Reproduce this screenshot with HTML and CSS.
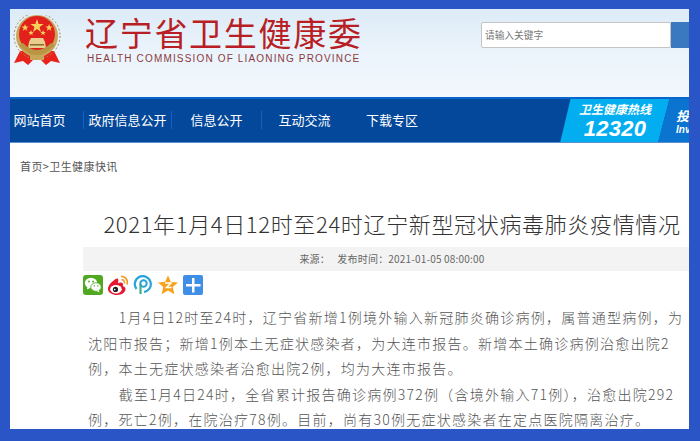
FILE: index.html
```html
<!DOCTYPE html>
<html lang="zh-CN">
<head>
  <meta charset="UTF-8" />
  <title>辽宁省卫生健康委</title>
  <link rel="stylesheet" href="styles.css">
</head>
<body>
<div class="page">
  <div class="header">
    <svg class="emblem" viewBox="0 0 48 50">
      <path d="M7 36 L1 48 L10 46 L15 50 L20 45 L28 45 L33 50 L38 46 L47 48 L41 36 Z" fill="#e8231c"/>
      <circle cx="24" cy="21" r="21" fill="#c9a55a"/>
      <circle cx="24" cy="21" r="23" fill="none" stroke="#a8894d" stroke-width="1" stroke-dasharray="2 2"/>
      <circle cx="24" cy="19" r="18" fill="#e3211c"/>
      <path d="M24 4 L25.6 9 L30.6 9 L26.5 12 L28 17 L24 14 L20 17 L21.5 12 L17.4 9 L22.4 9 Z" fill="#f4d35a"/>
      <path d="M12 9 l1 2.6 2.6 0 -2.1 1.6 .8 2.6 -2.3 -1.6 -2.2 1.6 .8 -2.6 -2.1 -1.6 2.6 0 Z" fill="#f4d35a"/>
      <path d="M36 9 l1 2.6 2.6 0 -2.1 1.6 .8 2.6 -2.3 -1.6 -2.2 1.6 .8 -2.6 -2.1 -1.6 2.6 0 Z" fill="#f4d35a"/>
      <path d="M18 15 l.8 2 2 0 -1.6 1.2 .6 2 -1.8 -1.2 -1.7 1.2 .6 -2 -1.6 -1.2 2 0 Z" fill="#f4d35a"/>
      <path d="M30 15 l.8 2 2 0 -1.6 1.2 .6 2 -1.8 -1.2 -1.7 1.2 .6 -2 -1.6 -1.2 2 0 Z" fill="#f4d35a"/>
      <path d="M16 27 L18 23 L30 23 L32 27 L33 33 L15 33 Z" fill="#e8cf90"/>
      <path d="M17 29 h14 v1.5 h-14 Z" fill="#8a6a30"/>
      <path d="M6 30 Q24 50 42 30 L38 28 Q24 42 10 28 Z" fill="#b99443"/>
      <path d="M17 40 h14 v5 h-14 Z" fill="#c9a55a"/>
    </svg>
    <div class="brand">
      <div class="brand-cn">辽宁省卫生健康委</div>
      <div class="brand-en">HEALTH COMMISSION OF LIAONING PROVINCE</div>
    </div>
    <div class="search">
      <input class="search-input" type="text" placeholder="请输入关键字">
      <button class="search-btn" type="button"></button>
    </div>
  </div>

  <div class="navbar">
    <a class="nav-item nav-first">网站首页</a>
    <a class="nav-item nav-gov">政府信息公开</a>
    <a class="nav-item nav-info">信息公开</a>
    <a class="nav-item nav-talk">互动交流</a>
    <a class="nav-item nav-down">下载专区</a>
    <div class="hotline">
      <span class="hotline-title">卫生健康热线</span>
      <span class="hotline-num">12320</span>
    </div>
    <div class="invest">
      <span class="invest-title">投诉</span>
      <span class="invest-en">Investigate</span>
    </div>
  </div>

  <div class="crumb">首页&gt;卫生健康快讯</div>

  <div class="article">
    <h1 class="article-title">2021年1月4日12时至24时辽宁新型冠状病毒肺炎疫情情况</h1>
    <div class="meta">来源：&nbsp;&nbsp;&nbsp;发布时间：2021-01-05 08:00:00</div>
    <div class="share">
      <svg class="share-icon" viewBox="0 0 20 20">
        <rect width="20" height="20" rx="3" fill="#4fa81f"/>
        <ellipse cx="8" cy="8" rx="6.2" ry="5.2" fill="#fff"/>
        <path d="M4.5 11 L4 14.5 L8 12.5 Z" fill="#fff"/>
        <ellipse cx="13" cy="12" rx="5.2" ry="4.3" fill="#fff" stroke="#4fa81f" stroke-width=".8"/>
        <path d="M15.5 15 L16.5 17.5 L13.5 16 Z" fill="#fff"/>
        <circle cx="6" cy="6.5" r=".9" fill="#4fa81f"/><circle cx="10" cy="6.5" r=".9" fill="#4fa81f"/>
        <circle cx="11.3" cy="11" r=".7" fill="#4fa81f"/><circle cx="14.8" cy="11" r=".7" fill="#4fa81f"/>
      </svg>
      <svg class="share-icon" viewBox="0 0 20 20">
        <path d="M9 3.5 C4.5 5.5 0 10 0 14 C0 17.5 4.5 20 9 20 C14 20 17.5 17 17.5 14 C17.5 12.3 16 11.4 14.8 11 C15.5 9.2 15 7.6 13 7.4 C12 7.3 10.8 7.8 10 8.2 C10.5 6 10.5 3 9 3.5 Z" fill="#e6162d"/>
        <ellipse cx="8" cy="14.2" rx="5.8" ry="4.2" fill="#fff"/>
        <circle cx="7.5" cy="14.4" r="2.6" fill="#222"/>
        <circle cx="6.7" cy="14.6" r=".8" fill="#fff"/>
        <path d="M13 1.5 C17 1 20.5 5 19 9.5" fill="none" stroke="#f59a23" stroke-width="1.7"/>
        <path d="M13.5 4.8 C15.5 4.5 17 6.3 16.4 8.5" fill="none" stroke="#f59a23" stroke-width="1.5"/>
      </svg>
      <svg class="share-icon" viewBox="0 0 20 20">
        <path d="M3.5 14 A8 8 0 1 1 11 17" fill="none" stroke="#29a3dc" stroke-width="2.2"/>
        <circle cx="10.5" cy="8.5" r="3.2" fill="none" stroke="#29a3dc" stroke-width="2"/>
        <path d="M7.5 9 V19" stroke="#3fae8c" stroke-width="2.2" fill="none"/>
      </svg>
      <svg class="share-icon" viewBox="0 0 20 20">
        <path d="M10 0.5 L12.8 6.8 L20 7.4 L14.7 12 L16.4 19.2 L10 15.5 L3.6 19.2 L5.3 12 L0 7.4 L7.2 6.8 Z" fill="#f5a31a"/>
        <path d="M7 8 H13 L8.5 12.5 H13.5" fill="none" stroke="#fff" stroke-width="1.5"/>
      </svg>
      <svg class="share-icon" viewBox="0 0 20 20">
        <rect width="20" height="20" rx="2" fill="#3f8fe6"/>
        <path d="M3 9 H9 V3 H11.5 V9 H17.5 V11.5 H11.5 V17.5 H9 V11.5 H3 Z" fill="#fff"/>
      </svg>
    </div>
    <div class="content">
      <p class="first-line">1月4日12时至24时，辽宁省新增1例境外输入新冠肺炎确诊病例，属普通型病例，为<br>沈阳市报告；新增1例本土无症状感染者，为大连市报告。新增本土确诊病例治愈出院2<br>例，本土无症状感染者治愈出院2例，均为大连市报告。</p>
      <p class="first-line">截至1月4日24时，全省累计报告确诊病例372例（含境外输入71例），治愈出院292<br>例，死亡2例，在院治疗78例。目前，尚有30例无症状感染者在定点医院隔离治疗。</p>
    </div>
  </div>
</div>
</body>
</html>
```

FILE: styles.css
```css
* { box-sizing: border-box; }
html, body { height: 100%; overflow: hidden; }
body {
  margin: 0;
  padding: 9px 11px 12px 10px;
  background: #2a55c6;
  font-family: 'Noto Sans CJK SC', 'Liberation Sans', sans-serif;
}
.page {
  height: 100%;
  overflow: hidden;
  background: #fff;
}
.header {
  height: 88px;
  display: flex;
  align-items: flex-start;
  background: linear-gradient(to bottom, #dcebf7, #eaf3fb 45%, #f2f8fd);
}
.emblem {
  width: 48px;
  height: 50px;
  margin: 6px 0 0 3px;
  flex: none;
}
.brand {
  margin-left: 24px;
  width: 290px;
  flex: none;
}
.brand-cn {
  margin-top: 6px;
  font-size: 33px;
  line-height: 34px;
  letter-spacing: 1.7px;
  color: #b81e24;
  white-space: nowrap;
}
.brand-en {
  margin: 4px 0 0 2px;
  font-family: 'Liberation Sans', sans-serif;
  font-size: 10px;
  line-height: 12px;
  letter-spacing: 1.16px;
  color: #8b3a40;
  white-space: nowrap;
}
.search {
  display: flex;
  margin: 13px 0 0 106px;
  height: 26px;
}
.search-input {
  width: 190px;
  height: 26px;
  padding: 0 3px;
  border: 1px solid #c4c4c4;
  border-radius: 2px;
  background: #fff;
  font-family: 'Noto Sans CJK SC', sans-serif;
  font-size: 9.7px;
  outline: none;
}
.search-input::placeholder { color: #777; opacity: 1; }
.search-btn {
  width: 18px;
  height: 26px;
  border: none;
  padding: 0;
  background: #3a78c0;
}
.navbar {
  height: 46px;
  display: flex;
  align-items: stretch;
  background: #03489a;
  border-top: 2px solid #0b66cc;
  border-bottom: 1px solid #5a8fd0;
  color: #fff;
  overflow: hidden;
}
.nav-item {
  font-size: 13px;
  line-height: 18px;
  margin-top: 12px;
  height: 18px;
  text-align: center;
  white-space: nowrap;
  flex: none;
}
.nav-first { width: 74px; padding-right: 14px; border-right: 1px solid #1463c4; }
.nav-gov { width: 88px; border-right: 1px solid #1463c4; }
.nav-info { width: 90px; border-right: 1px solid #1463c4; }
.nav-talk { width: 85px; }
.nav-down { width: 90px; }
.hotline {
  width: 110px;
  margin-left: 123px;
  margin-top: -2px;
  margin-bottom: -1px;
  flex: none;
  display: flex;
  flex-direction: column;
  align-items: center;
  padding-top: 3px;
  background: #03aef0;
  clip-path: polygon(11px 0, 100% 0, calc(100% - 12px) 100%, 0 100%);
  font-style: italic;
  font-weight: 700;
}
.hotline-title { font-size: 12px; line-height: 17px; }
.hotline-num { font-family: 'Liberation Sans', sans-serif; font-size: 22px; line-height: 23px; letter-spacing: .3px; }
.invest {
  width: 60px;
  margin-left: -12px;
  margin-top: -2px;
  margin-bottom: -1px;
  flex: none;
  padding: 10px 0 0 18px;
  background: #0a74d0;
  clip-path: polygon(12px 0, 100% 0, 100% 100%, 0 100%);
  font-style: italic;
  font-weight: 700;
  white-space: nowrap;
  overflow: hidden;
  display: flex;
  flex-direction: column;
}
.invest-title { font-size: 13px; line-height: 17px; }
.invest-en { font-family: 'Liberation Sans', sans-serif; font-size: 10px; line-height: 12px; }
.crumb {
  margin: 14px 0 0 10px;
  font-size: 11px;
  line-height: 18px;
  letter-spacing: .4px;
  color: #555;
}
.article {
  width: 618px;
  margin: 0 0 0 73px;
}
.article-title {
  margin: 32px 0 0;
  font-size: 22px;
  line-height: 32px;
  font-weight: 300;
  letter-spacing: .65px;
  text-align: center;
  white-space: nowrap;
  color: #333;
}
.meta {
  margin-top: 8px;
  height: 24px;
  background: #f3f3f3;
  font-size: 10px;
  line-height: 24px;
  letter-spacing: .2px;
  text-align: center;
  color: #666;
}
.share {
  display: flex;
  gap: 5px;
  margin-top: 4px;
  height: 20px;
}
.share-icon { width: 20px; height: 20px; flex: none; }
.content {
  margin-top: 10px;
  padding-left: 5px;
  font-family: 'Noto Sans CJK SC', serif;
  font-weight: 300;
  font-size: 14px;
  line-height: 25.6px;
  letter-spacing: 1.25px;
  color: #555;
  white-space: nowrap;
}
.content p { margin: 0; }
.first-line { text-indent: 2.2em; }
```
